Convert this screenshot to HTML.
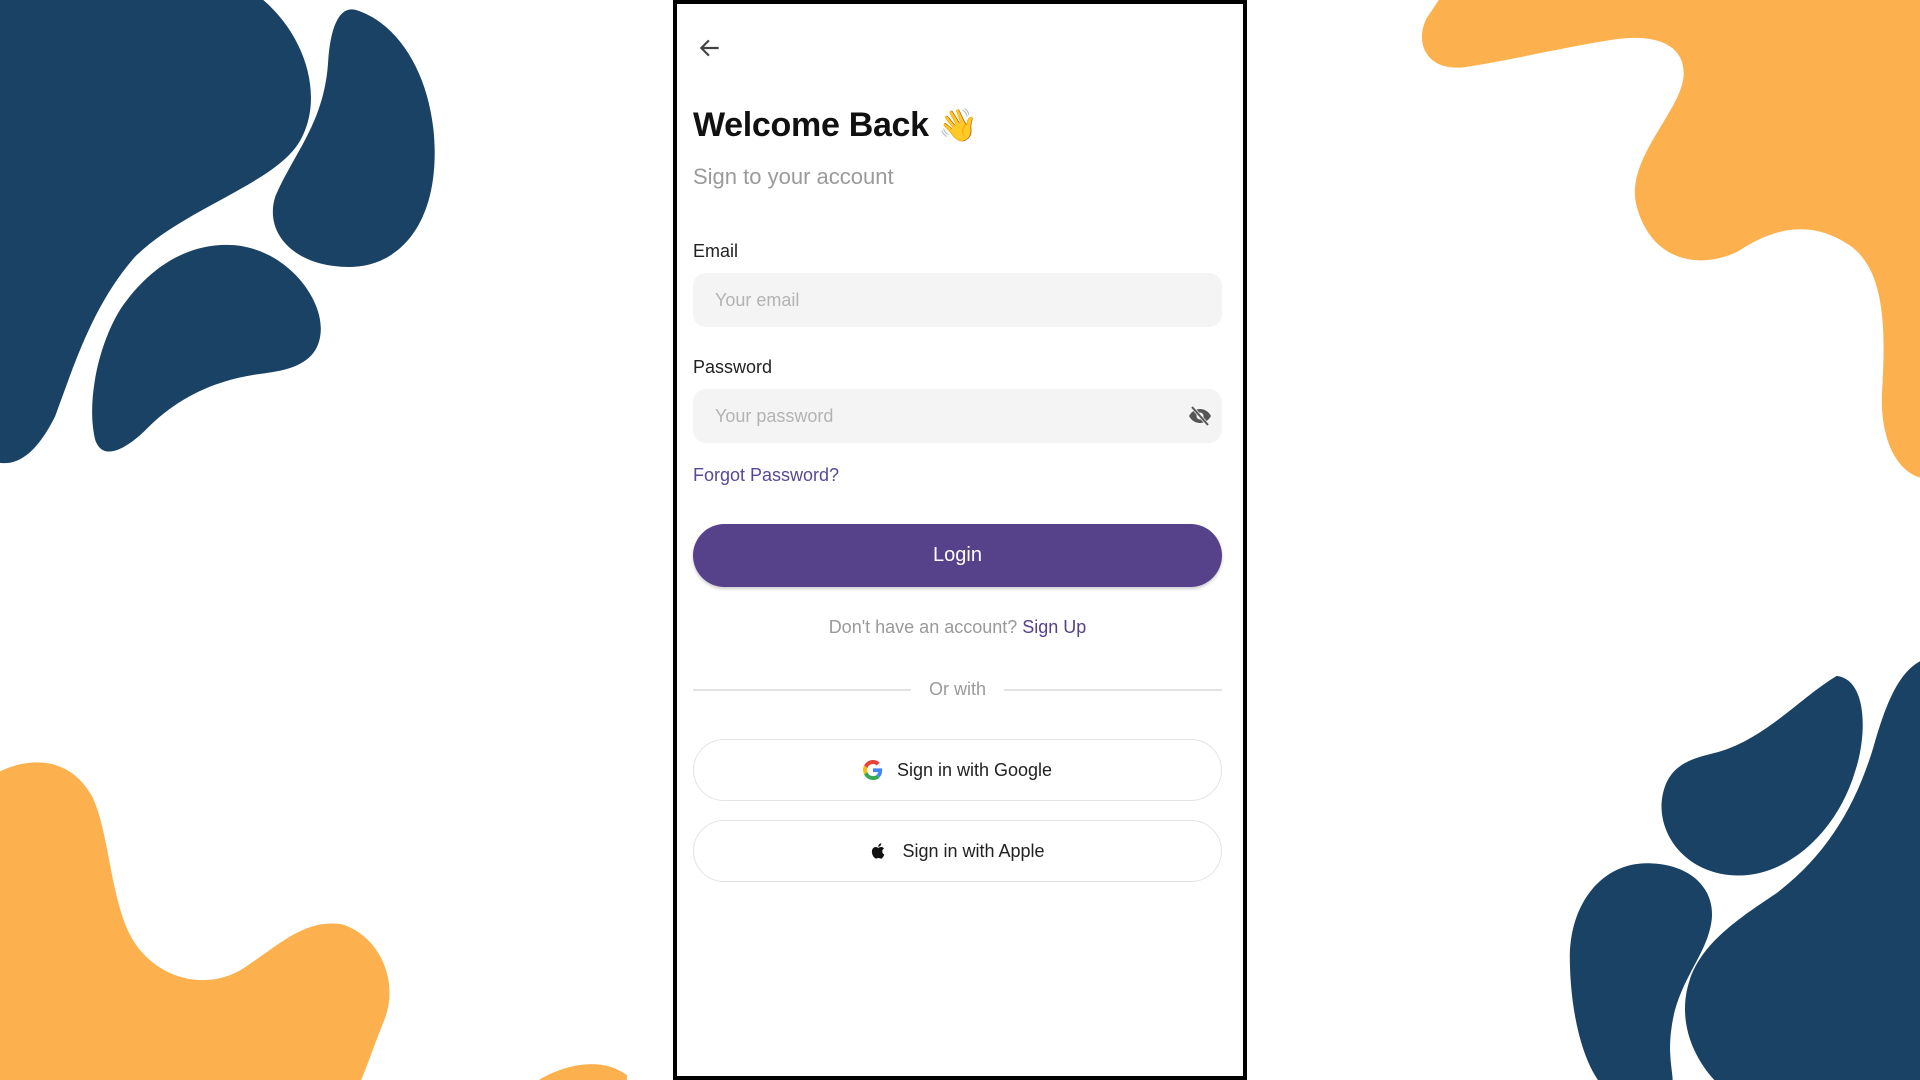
<!DOCTYPE html>
<html><head><meta charset="utf-8"><style>
*{margin:0;padding:0;box-sizing:border-box}
body{width:1920px;height:1080px;background:#fff;position:relative;overflow:hidden;font-family:"Liberation Sans",sans-serif}
svg.bg{position:absolute;left:0;top:0}
.phone{position:absolute;left:673px;top:0;width:574px;height:1080px;border:4px solid #000;background:#fff}
.abs{position:absolute}
.inp{position:absolute;left:16px;width:529px;height:54px;background:#f4f4f4;border-radius:13px;font-size:18px;color:#b3b3b3;padding-left:22px;line-height:54px}
.lbl{position:absolute;left:16px;font-size:18px;color:#222}
.ob{position:absolute;left:16px;width:529px;height:62px;border:1.5px solid #e3e3e3;border-radius:31px;display:flex;align-items:center;justify-content:center;font-size:18px;color:#222}
</style></head><body>
<svg class="bg" width="1920" height="1080" viewBox="0 0 1568 882" preserveAspectRatio="none">
<g fill="#1a4264">
<path d="M0,0 H215 C250,30 265,80 245,115 C225,150 150,170 110,210 C75,250 60,300 45,340 C30,370 15,380 0,378 Z"/>
<path d="M290,8 C330,20 355,70 355,125 C355,185 325,218 285,218 C240,218 215,190 225,160 C240,125 265,100 268,50 C270,20 278,5 290,8 Z"/>
<path d="M185,200 C230,200 262,240 262,268 C262,295 240,302 215,305 C175,310 145,325 120,350 C105,365 85,378 78,360 C70,330 80,280 100,250 C125,215 155,200 185,200 Z"/>
<path d="M1500,552 C1525,555 1525,600 1515,630 C1500,680 1460,715 1420,715 C1380,715 1355,685 1357,655 C1360,625 1380,620 1400,615 C1440,605 1470,570 1500,552 Z"/>
<path d="M1568,540 V882 H1400 C1380,860 1370,830 1380,800 C1390,770 1420,750 1450,730 C1490,700 1515,660 1530,610 C1540,575 1550,550 1568,540 Z"/>
<path d="M1345,705 C1380,705 1400,725 1398,750 C1395,780 1370,800 1365,840 C1362,860 1366,875 1366,882 H1305 C1290,860 1282,820 1282,780 C1283,735 1310,705 1345,705 Z"/>
</g>
<g fill="#fdb14e">
<path d="M0,630 C20,620 55,615 75,650 C90,680 90,740 110,770 C130,800 170,810 200,790 C230,770 250,750 280,755 C310,765 325,800 315,830 C305,855 300,870 295,882 L0,882 Z"/>
<path d="M440,882 C460,870 490,862 512,878 L512,882 Z"/>
<path d="M1175,0 H1568 V390 C1550,385 1535,360 1537,320 C1540,270 1540,220 1510,200 C1480,180 1450,185 1420,205 C1390,220 1350,215 1337,170 C1325,130 1375,90 1375,60 C1375,35 1350,28 1320,32 C1280,38 1230,50 1195,55 C1165,58 1155,35 1165,15 Z"/>
</g>
</svg>
<div class="phone">
<svg class="abs" style="left:20px;top:31px" width="26" height="26" viewBox="0 0 24 24"><path d="M20 12H5M11 5l-7 7 7 7" fill="none" stroke="#444" stroke-width="2"/></svg>
<div class="abs" style="left:16px;top:102px;font-size:34px;font-weight:bold;color:#111;letter-spacing:-0.3px">Welcome Back <span style="font-family:'Noto Color Emoji',sans-serif;font-size:32px">👋</span></div>
<div class="abs" style="left:16px;top:160px;font-size:22px;color:#9a9a9a">Sign to your account</div>
<div class="lbl" style="top:237px">Email</div>
<div class="inp" style="top:269px">Your email</div>
<div class="lbl" style="top:353px">Password</div>
<div class="inp" style="top:385px">Your password</div>
<svg class="abs" style="left:510px;top:400px" width="26" height="24" viewBox="0 0 24 24"><path d="M1 12C3.5 7.5 7.5 5 12 5s8.5 2.5 11 7c-2.5 4.5-6.5 7-11 7S3.5 16.5 1 12Z" fill="#555"/><circle cx="12" cy="12" r="3.5" fill="#f4f4f4"/><path d="M4 3L20 21" stroke="#f4f4f4" stroke-width="3.5"/><path d="M4 3L20 21" stroke="#555" stroke-width="2"/></svg>
<div class="abs" style="left:16px;top:461px;font-size:18px;color:#5a4894">Forgot Password?</div>
<div class="abs" style="left:16px;top:520px;width:529px;height:63px;border-radius:32px;background:#56418b;color:#fff;font-size:20px;display:flex;align-items:center;justify-content:center;box-shadow:0 2px 3px rgba(0,0,0,.2)">Login</div>
<div class="abs" style="left:16px;top:613px;width:529px;text-align:center;font-size:18px;color:#999">Don't have an account? <span style="color:#56418b">Sign Up</span></div>
<div class="abs" style="left:16px;top:685px;width:218px;height:1.5px;background:#e2e2e2"></div>
<div class="abs" style="left:327px;top:685px;width:218px;height:1.5px;background:#e2e2e2"></div>
<div class="abs" style="left:16px;top:675px;width:529px;text-align:center;font-size:18px;color:#9a9a9a">Or with</div>
<div class="ob" style="top:735px"><svg width="20" height="20" viewBox="0 0 48 48" style="margin-right:14px"><path fill="#EA4335" d="M24 9.5c3.5 0 6.6 1.2 9.1 3.6l6.8-6.8C35.8 2.4 30.3 0 24 0 14.6 0 6.6 5.4 2.7 13.3l7.9 6.1C12.5 13.7 17.8 9.5 24 9.5z"/><path fill="#4285F4" d="M46.1 24.5c0-1.6-.1-3.1-.4-4.5H24v9h12.4c-.5 2.9-2.2 5.3-4.6 7l7.5 5.8c4.4-4 6.8-10 6.8-17.3z"/><path fill="#FBBC05" d="M10.5 28.6c-.5-1.4-.8-3-.8-4.6s.3-3.2.8-4.6l-7.9-6.1C1 16.6 0 20.2 0 24s1 7.4 2.7 10.7l7.8-6.1z"/><path fill="#34A853" d="M24 48c6.5 0 11.9-2.1 15.9-5.8l-7.5-5.8c-2.1 1.4-4.8 2.3-8.4 2.3-6.2 0-11.5-4.2-13.4-9.9l-7.9 6.1C6.6 42.6 14.6 48 24 48z"/></svg>Sign in with Google</div>
<div class="ob" style="top:816px"><svg width="18" height="20" viewBox="0 0 24 24" style="margin-right:14px"><path fill="#111" d="M16.4 12.6c0-2.6 2.1-3.8 2.2-3.9-1.2-1.8-3.1-2-3.7-2-1.6-.2-3.1.9-3.9.9-.8 0-2-.9-3.4-.9-1.7 0-3.3 1-4.2 2.6-1.8 3.1-.5 7.7 1.3 10.2.9 1.2 1.9 2.6 3.2 2.6 1.3-.1 1.8-.8 3.3-.8 1.6 0 2 .8 3.4.8 1.4 0 2.3-1.3 3.1-2.5 1-1.4 1.4-2.8 1.4-2.9 0 0-2.7-1-2.7-4.1zM13.9 4.9c.7-.9 1.2-2 1.1-3.2-1 0-2.3.7-3 1.6-.7.8-1.2 2-1.1 3.1 1.2.1 2.3-.6 3-1.5z"/></svg>Sign in with Apple</div>
</div>
</body></html>
